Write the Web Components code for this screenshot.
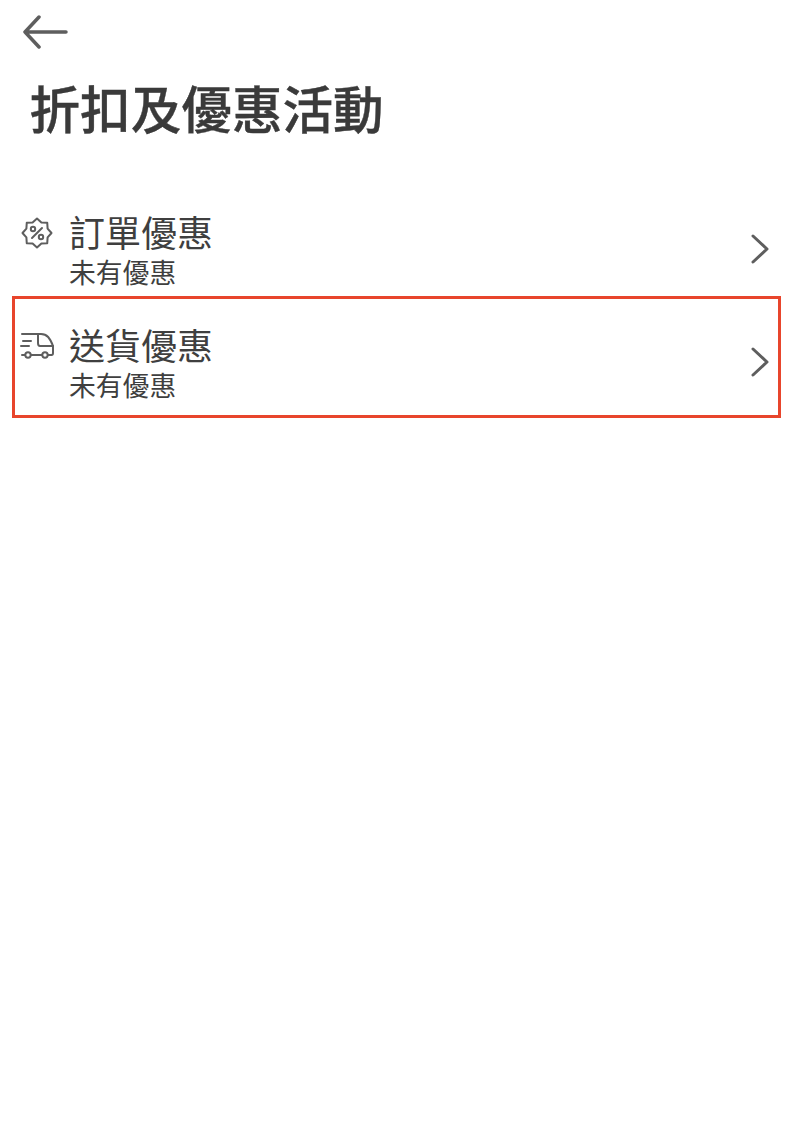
<!DOCTYPE html>
<html lang="zh-Hant">
<head>
<meta charset="utf-8">
<title>折扣及優惠活動</title>
<style>
  html, body { margin: 0; background: #fff; }
  body {
    font-family: "Noto Sans CJK TC", "Noto Sans", sans-serif;
    color: #3c3c3c;
  }
</style>
</head>
<body>
<offers-page>
  <page-header title="折扣及優惠活動"></page-header>
  <offer-row label="訂單優惠" note="未有優惠" icon="badge"></offer-row>
  <offer-row label="送貨優惠" note="未有優惠" icon="truck" highlighted></offer-row>
</offers-page>

<script>
const icons = {
  badge: `
    <svg width="32" height="32" viewBox="0 0 32 32" fill="none" stroke="#5e5e5e" stroke-width="2" stroke-linejoin="round" stroke-linecap="round">
      <path d="M16 1.500L20.400 5.400 26.250 5.750 26.600 11.600 30.500 16 26.600 20.400 26.250 26.250 20.400 26.600 16 30.500 11.600 26.600 5.750 26.250 5.400 20.400 1.500 16 5.400 11.600 5.750 5.750 11.600 5.400z"/>
      <circle cx="12" cy="12" r="2.200"/>
      <circle cx="20" cy="20" r="2.200"/>
      <path d="M21 11l-10 10"/>
    </svg>`,
  truck: `
    <svg width="36" height="30" viewBox="0 0 36 30" fill="none" stroke="#5e5e5e" stroke-width="2" stroke-linecap="round" stroke-linejoin="round">
      <path d="M3 4h19c6 0 9 4 12 12v7c0 1-.5 2-1.500 2h-3.500"/>
      <path d="M12 25h11"/>
      <path d="M3 25h3"/>
      <circle cx="9" cy="25" r="2.700"/>
      <circle cx="26" cy="25" r="2.700"/>
      <path d="M19 4v9c0 2 .5 3 2 3h13"/>
      <path d="M4 11h8M2 16h8"/>
    </svg>`
};

const tplHeader = document.createElement('template');
tplHeader.innerHTML = `
  <style>
    :host { display: block; }
    .back {
      display: block;
      height: 70px;
      padding-left: 22px;
    }
    .back svg { display: block; padding-top: 15px; }
    h1 {
      margin: 0;
      padding-left: 29.500px;
      font-size: 50.600px;
      line-height: 74px;
      font-weight: 500;
      color: #3a3a3a;
      -webkit-text-stroke: .4px #3a3a3a;
    }
  </style>
  <div class="back">
    <svg width="46" height="34" viewBox="0 0 46 34" fill="none" stroke="#5e5e5e" stroke-width="3.500" stroke-linecap="round" stroke-linejoin="round">
      <path d="M44 17H3M17 2L3 17l14 15"/>
    </svg>
  </div>
  <h1 id="title"></h1>
`;

class PageHeader extends HTMLElement {
  constructor() {
    super();
    this.attachShadow({ mode: 'open' }).appendChild(tplHeader.content.cloneNode(true));
  }
  connectedCallback() {
    this.shadowRoot.getElementById('title').textContent = this.getAttribute('title');
  }
}
customElements.define('page-header', PageHeader);

const tplRow = document.createElement('template');
tplRow.innerHTML = `
  <style>
    :host {
      display: block;
      margin: 0 11px 0 12px;
      border: 3px solid transparent;
      box-sizing: border-box;
      height: 94px;
    }
    :host([highlighted]) { border-color: #e8452c; height: 122px; }
    .row {
      display: grid;
      grid-template-columns: 54px 1fr 28px;
      grid-template-rows: 46px 36px;
      align-content: center;
      align-items: center;
      height: 100%;
      box-sizing: border-box;
    }
    :host([highlighted]) .row { padding-top: 10px; }
    .icon { display: flex; justify-content: flex-start; padding: 4px 0 0 6px; }
    :host([highlighted]) .icon { padding: 2px 0 0 4px; }
    .icon svg { display: block; }
    .label { font-size: 36px; line-height: 46px; color: #3f3f3f; }
    .note { grid-column: 2; font-size: 26.800px; line-height: 36px; color: #3f3f3f; }
    .chev { grid-column: 3; grid-row: 1 / span 2; display: block; }
  </style>
  <div class="row">
    <div class="icon" id="icon"></div>
    <div class="label" id="label"></div>
    <svg class="chev" width="20" height="30" viewBox="0 0 20 30" fill="none" stroke="#5e5e5e" stroke-width="3" stroke-linecap="round" stroke-linejoin="round">
      <path d="M3 2l14 13L3 28"/>
    </svg>
    <div class="note" id="note"></div>
  </div>
`;

class OfferRow extends HTMLElement {
  constructor() {
    super();
    this.attachShadow({ mode: 'open' }).appendChild(tplRow.content.cloneNode(true));
  }
  connectedCallback() {
    const s = this.shadowRoot;
    s.getElementById('label').textContent = this.getAttribute('label');
    s.getElementById('note').textContent = this.getAttribute('note');
    s.getElementById('icon').innerHTML = icons[this.getAttribute('icon')] || '';
  }
}
customElements.define('offer-row', OfferRow);

const tplPage = document.createElement('template');
tplPage.innerHTML = `
  <style>
    :host { display: block; height: 1144px; background: #fff; }
    ::slotted(page-header) { margin-bottom: 58px; }
  </style>
  <slot></slot>
`;

class OffersPage extends HTMLElement {
  constructor() {
    super();
    this.attachShadow({ mode: 'open' }).appendChild(tplPage.content.cloneNode(true));
  }
}
customElements.define('offers-page', OffersPage);
</script>
</body>
</html>
